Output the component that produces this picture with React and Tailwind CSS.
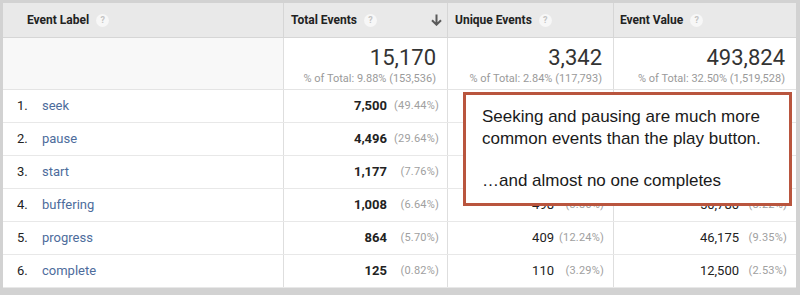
import React from "react";

// rows 1-3 of the unique / value columns sit fully under the callout
const rows = [
  { n: 1, label: "seek", total: "7,500", totalPct: "(49.44%)", uniq: "", uniqPct: "", value: "", valuePct: "" },
  { n: 2, label: "pause", total: "4,496", totalPct: "(29.64%)", uniq: "", uniqPct: "", value: "", valuePct: "" },
  { n: 3, label: "start", total: "1,177", totalPct: "(7.76%)", uniq: "", uniqPct: "", value: "", valuePct: "" },
  { n: 4, label: "buffering", total: "1,008", totalPct: "(6.64%)", uniq: "498", uniqPct: "(3.86%)", value: "50,780", valuePct: "(8.22%)" },
  { n: 5, label: "progress", total: "864", totalPct: "(5.70%)", uniq: "409", uniqPct: "(12.24%)", value: "46,175", valuePct: "(9.35%)" },
  { n: 6, label: "complete", total: "125", totalPct: "(0.82%)", uniq: "110", uniqPct: "(3.29%)", value: "12,500", valuePct: "(2.53%)" },
];

const grid = "grid grid-cols-[280px_164px_166px_183px]";

function Help() {
  return (
    <span className="ml-[7px] inline-flex h-[13px] w-[13px] items-center justify-center rounded-full bg-[#f7f7f7] text-[9px] font-bold leading-none text-[#c4c4c4]">
      ?
    </span>
  );
}

function Summary({ big, sub }) {
  return (
    <div className="flex flex-col items-end border-l border-[#dedede] bg-white pr-[11px] pt-[7px]">
      <span className="text-[22px] leading-[26px] text-[#333]">{big}</span>
      <span className="mt-[1px] text-[11px] leading-[14px] text-[#9a9a9a]">{sub}</span>
    </div>
  );
}

function Val({ v, pct, pctW, bold, pr }) {
  return (
    <div className={`flex items-center justify-end border-l border-[#dedede] ${pr}`}>
      {v && <span className={`text-[13px] text-[#222] ${bold ? "font-bold" : ""}`}>{v}</span>}
      {pct && <span className={`${pctW} text-right text-[11px] tracking-[0.2px] text-[#a0a0a0]`}>{pct}</span>}
    </div>
  );
}

export default function App() {
  return (
    <div className="h-[295px] w-[800px] bg-[#d2d2d2] pb-[7px] pl-[3px] pr-[4px] pt-[3px] font-['Roboto',sans-serif]">
      <div className="relative h-[285px] overflow-hidden bg-white">
        {/* header */}
        <div className={`${grid} h-[35px] border-b border-[#d6d6d6] bg-[#e9e9e9] text-[12px] font-bold text-[#222]`}>
          <div className="flex items-center pl-[24px]">
            Event Label <Help />
          </div>
          <div className="flex items-center border-l border-[#d6d6d6] pl-[7px] pr-[5px]">
            Total Events <Help />
            <svg className="ml-auto" width="11" height="12" viewBox="0 0 11 12" fill="none" stroke="#5a5a5a" strokeWidth="2">
              <path d="M5.5 0.5v10M1 6.2l4.5 4.5 4.5-4.5" />
            </svg>
          </div>
          <div className="flex items-center border-l border-[#d6d6d6] pl-[7px]">
            Unique Events <Help />
          </div>
          <div className="flex items-center border-l border-[#d6d6d6] pl-[6px]">
            Event Value <Help />
          </div>
        </div>

        {/* summary */}
        <div className={`${grid} h-[52px] border-b border-[#e4e4e4]`}>
          <div className="bg-[#f8f8f8]" />
          <Summary big="15,170" sub="% of Total: 9.88% (153,536)" />
          <Summary big="3,342" sub="% of Total: 2.84% (117,793)" />
          <Summary big="493,824" sub="% of Total: 32.50% (1,519,528)" />
        </div>

        {/* rows */}
        {rows.map((r) => (
          <div key={r.n} className={`${grid} h-[33px] border-b border-[#e8e8e8]`}>
            <div className="flex items-center text-[13px]">
              <span className="w-[39px] pl-[14px] text-[#222]">{r.n}.</span>
              <span className="text-[#4d6c9c]">{r.label}</span>
            </div>
            <Val v={r.total} pct={r.totalPct} pctW="w-[52px]" bold pr="pr-[8px]" />
            <Val v={r.uniq} pct={r.uniqPct} pctW="w-[50px]" pr="pr-[9px]" />
            <Val v={r.value} pct={r.valuePct} pctW="w-[48px]" pr="pr-[9px]" />
          </div>
        ))}

        {/* callout */}
        <div className="absolute left-[460px] top-[89px] h-[114px] w-[329px] border-[3px] border-[#b9553e] bg-white pl-[16px] pt-[11px] font-['Liberation_Sans',sans-serif] text-[17px] leading-[22px] text-[#1a1a1a]">
          <p>Seeking and pausing are much more</p>
          <p>common events than the play button.</p>
          <p className="mt-[20px]">…and almost no one completes</p>
        </div>
      </div>
    </div>
  );
}
